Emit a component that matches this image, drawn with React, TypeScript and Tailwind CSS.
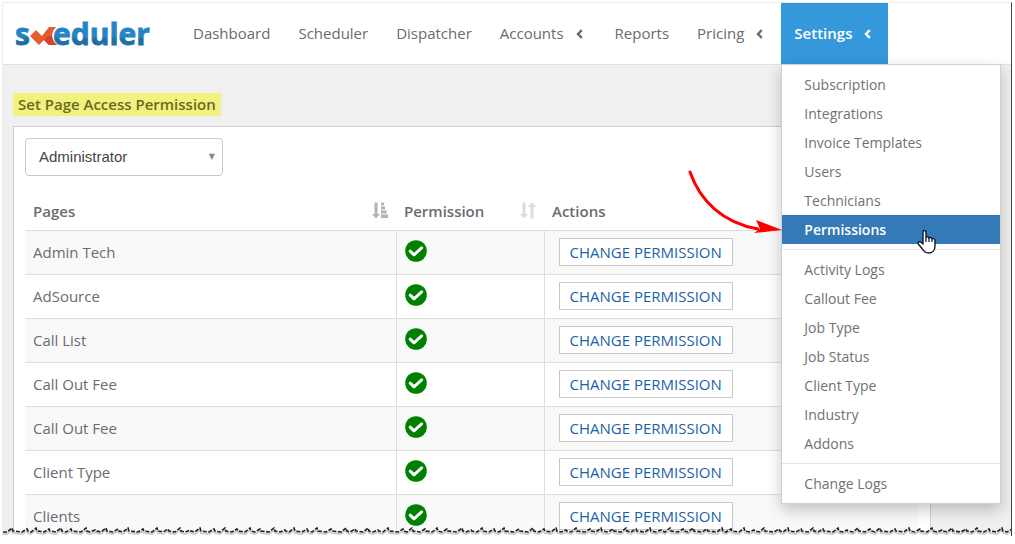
import React, { useState } from "react";

interface NavItem {
  label: string;
  hasMenu?: boolean;
  active?: boolean;
}

const navItems: NavItem[] = [
  { label: "Dashboard" },
  { label: "Scheduler" },
  { label: "Dispatcher" },
  { label: "Accounts", hasMenu: true },
  { label: "Reports" },
  { label: "Pricing", hasMenu: true },
  { label: "Settings", hasMenu: true, active: true },
];

const menuGroups: string[][] = [
  ["Subscription", "Integrations", "Invoice Templates", "Users", "Technicians", "Permissions"],
  ["Activity Logs", "Callout Fee", "Job Type", "Job Status", "Client Type", "Industry", "Addons"],
  ["Change Logs"],
];

const pages = [
  "Admin Tech",
  "AdSource",
  "Call List",
  "Call Out Fee",
  "Call Out Fee",
  "Client Type",
  "Clients",
];

const Logo = () => (
  <a href="#" aria-label="skeduler" className="ml-3 flex w-[164px] shrink-0 items-center">
    <svg width="150" height="48" viewBox="0 0 150 48">
      <defs>
        <linearGradient id="logoBlue" x1="0" y1="0" x2="0" y2="48" gradientUnits="userSpaceOnUse">
          <stop offset="0.56" stopColor="#2484c6" />
          <stop offset="0.6" stopColor="#1f6fa5" />
        </linearGradient>
      </defs>
      <g
        fill="url(#logoBlue)"
        stroke="url(#logoBlue)"
        strokeWidth="0.8"
        fontFamily="'Open Sans', sans-serif"
        fontSize="30"
        fontWeight="700"
      >
        <text x="0" y="35">s</text>
        <text x="38" y="35">eduler</text>
      </g>
      <path d="M15 26 L21 20 L27 26 L34 17 L41 17 Q38 20 37 25 Q37 31 42 35 L34 35 L29 30 L24 35 Z" fill="#e65c32" />
      <path d="M32 27 L37 25 Q37 31 42 35 L34 35 L29 30 Z" fill="#d2452a" />
    </svg>
  </a>
);

const Chevron = () => (
  <svg width="7" height="10" viewBox="0 0 7 10" className="ml-3 mr-1">
    <path d="M5.8 1.2 L2 5 L5.8 8.8" fill="none" stroke="currentColor" strokeWidth="2.4" />
  </svg>
);

const SortedIcon = () => (
  <svg width="16" height="17" viewBox="0 0 16 17" fill="#b4b4b4">
    <path d="M2.5 0.5h3v11.5H8L4 16.5 0 12h2.5z" />
    <path d="M9 0.5h3v3H9zM9 4.5h4v3H9zM9 8.5h5.5v3H9zM9 12.5h7v3.5H9z" />
  </svg>
);

const SortIcon = () => (
  <svg width="16" height="17" viewBox="0 0 16 17" fill="#dcdcdc">
    <path d="M2.5 0.5h3v11.5H8L4 16.5 0 12h2.5z" />
    <path d="M10.5 16.5h3V5H16L12 0.5 8 5h2.5z" />
  </svg>
);

const AllowedIcon = () => (
  <svg width="22" height="22" viewBox="0 0 22 22" role="img" aria-label="Allowed" className="-mt-0.5">
    <circle cx="11" cy="11" r="10.8" fill="#008000" />
    <path
      d="M5.2 11.2 L9 14.8 L16.6 7.8"
      fill="none"
      stroke="#fff"
      strokeWidth="3"
      strokeLinecap="round"
      strokeLinejoin="round"
    />
  </svg>
);

const PointerArrow = () => (
  <svg
    width="96"
    height="68"
    viewBox="0 0 96 68"
    className="pointer-events-none absolute right-full bottom-1/2 -mb-2"
  >
    <path d="M4 2 C14 31 37 53 72 59" fill="none" stroke="#f00" strokeWidth="3" strokeLinecap="round" />
    <path d="M96 60 L70 50 L74 59 L68 63 Z" fill="#f00" />
  </svg>
);

const HandCursor = () => (
  <svg
    width="19"
    height="25"
    viewBox="0 0 19 25"
    className="pointer-events-none absolute top-3.5 right-16 z-10"
  >
    <path
      d="M6 15 V3.5 C6 0.8 9 0.8 9 3.5 V9 C9 7.3 12 7.3 12 9.5 C12 8 15 8.2 15 10.2 C15.5 9 18 9.3 18 11.5 V17 C18 21 15.5 24 11.5 24 C8 24 6.5 22 5 19.5 L1.3 15 C0.3 13 2.5 12 4 13.3 Z"
      fill="#fff"
      stroke="#111827"
      strokeWidth="1.4"
      strokeLinejoin="round"
    />
    <path d="M9 9 V13 M12 9.5 V13 M15 10.5 V13" stroke="#111827" strokeWidth="1.2" />
  </svg>
);

// Ragged paper edge, long enough for wide windows
const tornPath = () => {
  const steps = [9, 12, 10, 14, 9, 11, 8, 13];
  const rises = [4, 3, 4, 2, 4, 3, 4, 3];
  let x = 0;
  let d = "M0 6";
  for (let i = 0; x < 2600; i++) {
    const step = steps[(i * 3 + (i >> 2)) % 8];
    const rise = rises[(i * 5) % 8];
    d += ` L${x + step - 5} 6 L${x + step} ${6 - rise} L${x + step + 1} 5`;
    x += step + 1;
  }
  return { d, end: x };
};

const TornEdge = () => {
  const { d, end } = tornPath();
  return (
    <svg width="100%" height="10" className="absolute bottom-0 left-0 z-30 block">
      <path d={`${d} L${end} 12 L0 12 Z`} fill="#fff" />
      <path d={d} transform="translate(0 2)" fill="none" stroke="#ccc" strokeWidth="2" />
      <path d={d} fill="none" stroke="#222" strokeWidth="1.6" strokeDasharray="4 1.5" />
    </svg>
  );
};

const SettingsMenu = () => (
  <div className="absolute top-full left-0 z-20 w-[220px] border border-[#d0d0d0] bg-white py-[5px] text-sm text-[#6f7275] shadow-[0_6px_14px_rgba(0,0,0,0.22)]">
    {menuGroups.map((group, index) => (
      <ul key={index} className={index > 0 ? "mt-[5px] border-t border-[#e5e5e5] pt-[5px]" : ""}>
        {group.map((label) => (
          <li key={label} className="relative">
            <a
              href="#"
              className={
                label === "Permissions"
                  ? "block bg-[#337ab7] px-[22px] leading-[29px] font-semibold text-white"
                  : "block px-[22px] leading-[29px]"
              }
            >
              {label}
            </a>
            {label === "Permissions" && (
              <>
                <PointerArrow />
                <HandCursor />
              </>
            )}
          </li>
        ))}
      </ul>
    ))}
  </div>
);

const NavBar = () => (
  <header className="flex h-[62px] shrink-0 border-b border-[#e0e0e0] bg-white">
    <Logo />
    <nav>
      <ul className="flex h-full">
        {navItems.map((item) => (
          <li key={item.label} className="relative">
            <a
              href="#"
              className={
                item.active
                  ? "-mb-px flex h-[62px] items-center border-b border-[#2f6fed] bg-[#3498db] px-[13px] font-semibold text-white"
                  : "flex h-full items-center px-[14px] text-[#6a6c6f]"
              }
            >
              {item.label}
              {item.hasMenu && <Chevron />}
            </a>
            {item.active && <SettingsMenu />}
          </li>
        ))}
      </ul>
    </nav>
  </header>
);

const PermissionTable = () => (
  <table className="mt-4 w-full table-fixed border-collapse text-left text-[#6a6c6f]">
    <thead>
      <tr className="h-[38px]">
        <th className="w-[371px] px-2 font-semibold">
          <span className="flex items-center justify-between">
            Pages
            <SortedIcon />
          </span>
        </th>
        <th className="w-[148px] px-2 font-semibold">
          <span className="flex items-center justify-between">
            Permission
            <SortIcon />
          </span>
        </th>
        <th className="px-2 font-semibold">Actions</th>
      </tr>
    </thead>
    <tbody>
      {pages.map((page, index) => (
        <tr key={index} className="h-11 border-t border-[#ddd] odd:bg-[#f9f9f9]">
          <td className="border-r border-[#ddd] px-2">{page}</td>
          <td className="border-r border-[#ddd] px-2">
            <AllowedIcon />
          </td>
          <td className="px-[14px]">
            <button
              type="button"
              className="block h-7 border border-[#c8c8c8] bg-white px-[10px] leading-6 whitespace-nowrap text-[#1b5fa8]"
            >
              CHANGE PERMISSION
            </button>
          </td>
        </tr>
      ))}
    </tbody>
  </table>
);

const App: React.FC = () => {
  const [role, setRole] = useState("Administrator");

  return (
    <div className="h-screen overflow-hidden bg-white pt-[2px] pr-[3px] pb-2 pl-[2px] font-['Open_Sans',sans-serif] text-[15px]">
      <div className="relative flex h-full flex-col overflow-hidden border-t border-r border-l border-t-[#ececec] border-r-[#444] border-l-[#ececec] bg-[#f0f0f0]">
        <NavBar />
        <main className="pt-7 pr-20 pl-[10px]">
          <h1 className="inline-block bg-[#f1f17f] px-[5px] leading-[23px] font-semibold text-[#6b6a1c]">
            Set Page Access Permission
          </h1>
          <section className="mt-[10px] border border-[#cdcdd2] bg-white px-[11px] pt-[11px]">
            <div className="relative w-[198px]">
              <select
                aria-label="Role"
                value={role}
                onChange={(e) => setRole(e.target.value)}
                className="h-[38px] w-full appearance-none rounded border border-[#c8c8c8] bg-white px-[13px] font-['Liberation_Sans',sans-serif] text-[#444]"
              >
                <option>Administrator</option>
                <option>Technician</option>
              </select>
              <span className="pointer-events-none absolute top-3 right-2 font-['DejaVu_Sans',sans-serif] text-[8px] leading-[14px] text-[#888]">
                ▼
              </span>
            </div>
            <PermissionTable />
          </section>
        </main>
        <TornEdge />
      </div>
    </div>
  );
};

export default App;
